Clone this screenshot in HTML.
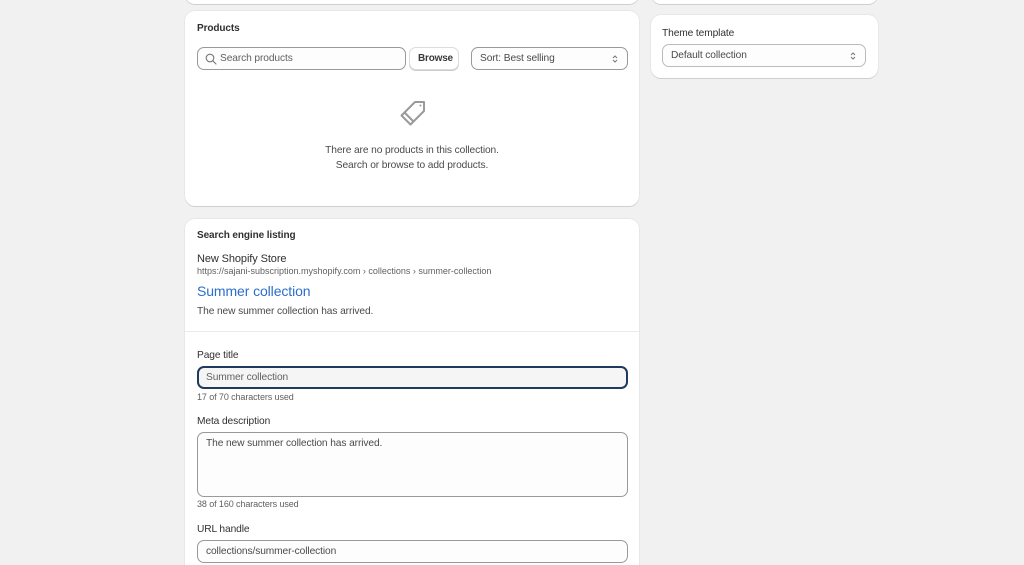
<!DOCTYPE html>
<html><head><meta charset="utf-8"><style>
*{box-sizing:border-box;margin:0;padding:0}
html{width:1024px;height:565px;overflow:hidden}
body{width:1024px;height:565px;overflow:hidden;background:#f1f1f1;font-family:"Liberation Sans",sans-serif;color:#303030;position:relative;letter-spacing:-0.1px}
.card{position:absolute;background:#fff;border-radius:10px;box-shadow:0 1px 0 rgba(0,0,0,.1),0 0 0 1px rgba(0,0,0,.04)}
.abs{position:absolute}
.h{font-size:10px;font-weight:bold;color:#303030}
.inp{position:absolute;border:1px solid #999;border-radius:7px;background:#fdfdfd;font-size:10.2px;color:#4a4a4a}
.lbl{position:absolute;font-size:10.2px;color:#303030}
.small{position:absolute;font-size:9px;color:#616161}
.updown{position:absolute;right:9px;top:50%;margin-top:-5px}
</style></head><body>
<div class="card" style="left:185px;top:-20px;width:454px;height:24px"></div>
<div class="card" style="left:651px;top:-20px;width:227px;height:24px"></div>

<div class="card" style="left:185px;top:11px;width:454px;height:195px">
  <div class="abs h" style="left:12px;top:12px">Products</div>
  <div class="inp" style="left:12px;top:36px;width:209px;height:23px">
    <svg class="abs" style="left:7px;top:5px" width="12" height="12" viewBox="0 0 12 12"><circle cx="5" cy="5" r="3.8" fill="none" stroke="#777" stroke-width="1.1"/><path d="M8 8l3 3" stroke="#777" stroke-width="1.1" stroke-linecap="round"/></svg>
    <span class="abs" style="left:22px;top:5px;color:#616161">Search products</span>
  </div>
  <div class="inp" style="left:224px;top:36px;width:50px;height:23px;border-color:#dcdcdc;box-shadow:0 1px 0 #ccc;background:#fff;font-weight:bold;color:#3a3a3a;font-size:10px;letter-spacing:-0.2px"><span class="abs" style="left:8px;top:5px">Browse</span></div>
  <div class="inp" style="left:286px;top:36px;width:157px;height:23px"><span class="abs" style="left:8px;top:5px">Sort: Best selling</span>
    <svg class="updown" width="6" height="10" viewBox="0 0 6 10"><path d="M1 4l2-2 2 2M1 6l2 2 2-2" fill="none" stroke="#777" stroke-width="1"/></svg></div>
  <svg class="abs" style="left:213px;top:87px" width="30" height="30" viewBox="0 0 30 30"><g fill="none" stroke="#9a9a9a" stroke-width="2" stroke-linejoin="round"><path d="M17 4h9v9L12.5 26.5 3.5 17.5z"/><path d="M6.5 14.5l9 9"/></g><circle cx="22.5" cy="7.5" r="1" fill="#9a9a9a"/></svg>
  <div class="abs" style="left:0;width:454px;top:133px;text-align:center;font-size:10.2px;color:#4a4a4a;line-height:14.5px">There are no products in this collection.<br>Search or browse to add products.</div>
</div>

<div class="card" style="left:185px;top:219px;width:454px;height:370px">
  <div class="abs h" style="left:12px;top:11px">Search engine listing</div>
  <div class="abs" style="left:12px;top:34px;font-size:11px;color:#303030">New Shopify Store</div>
  <div class="abs" style="left:12px;top:47px;font-size:9px;color:#616161;letter-spacing:0">https://sajani-subscription.myshopify.com › collections › summer-collection</div>
  <div class="abs" style="left:12px;top:64px;font-size:14px;color:#2c6ecb">Summer collection</div>
  <div class="abs" style="left:12px;top:87px;font-size:10.2px;color:#4a4a4a">The new summer collection has arrived.</div>
  <div class="abs" style="left:0;top:112px;width:454px;height:1px;background:#ebebeb"></div>
  <div class="lbl" style="left:12px;top:131px">Page title</div>
  <div class="inp" style="left:12px;top:147px;width:431px;height:23px;border:2px solid #1f3a5c;background:#f5f5f5"><span class="abs" style="left:7px;top:4px;color:#616161">Summer collection</span></div>
  <div class="small" style="left:12px;top:173px">17 of 70 characters used</div>
  <div class="lbl" style="left:12px;top:197px">Meta description</div>
  <div class="inp" style="left:12px;top:213px;width:431px;height:65px"><span class="abs" style="left:8px;top:5px">The new summer collection has arrived.</span></div>
  <div class="small" style="left:12px;top:280px">38 of 160 characters used</div>
  <div class="lbl" style="left:12px;top:305px">URL handle</div>
  <div class="inp" style="left:12px;top:321px;width:431px;height:23px"><span class="abs" style="left:8px;top:5px">collections/summer-collection</span></div>
</div>

<div class="card" style="left:651px;top:15px;width:227px;height:63px">
  <div class="lbl" style="left:11px;top:13px">Theme template</div>
  <div class="inp" style="left:11px;top:29px;width:204px;height:23px;border-color:#bbb"><span class="abs" style="left:8px;top:5px">Default collection</span>
    <svg class="updown" width="6" height="10" viewBox="0 0 6 10"><path d="M1 4l2-2 2 2M1 6l2 2 2-2" fill="none" stroke="#777" stroke-width="1"/></svg></div>
</div>
</body></html>
